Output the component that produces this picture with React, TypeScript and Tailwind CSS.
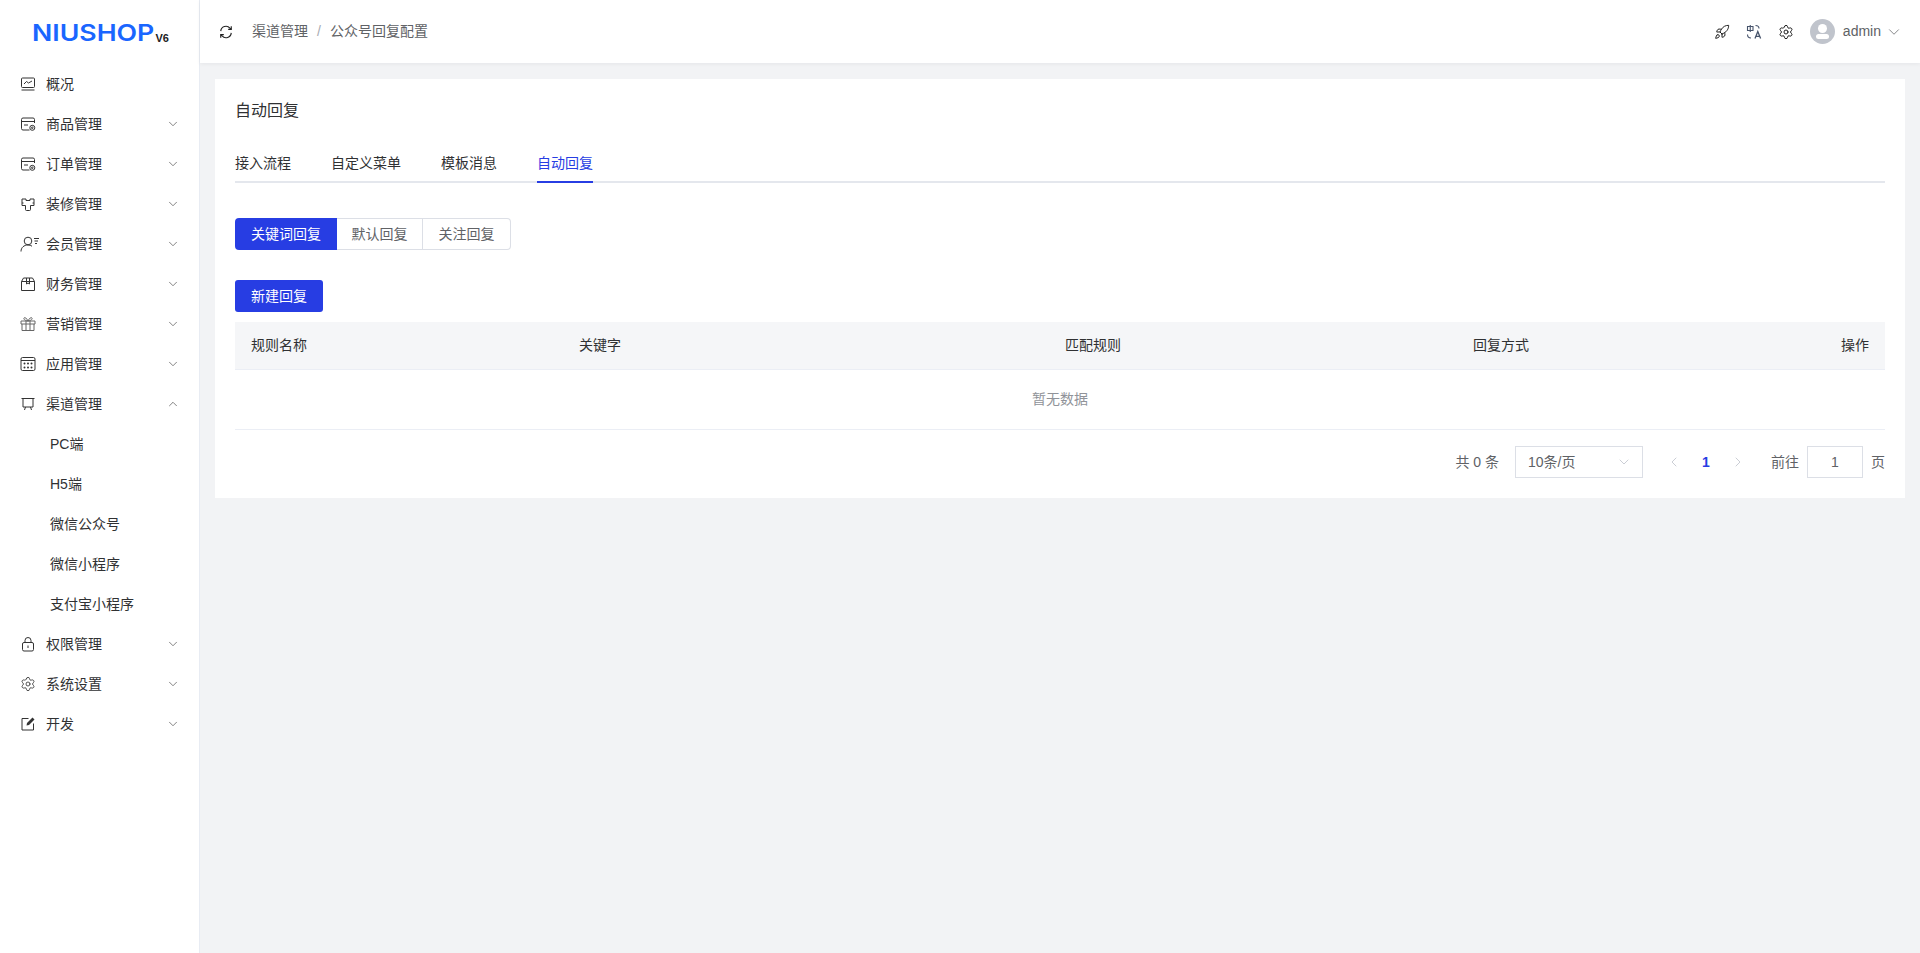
import React from "react";
import { ChevronDown, ChevronUp, ChevronLeft, ChevronRight, Rocket, Settings } from "lucide-react";

const icon = "w-4 h-4 text-[#333] shrink-0";
const S = { fill: "none", stroke: "currentColor", strokeWidth: 1, viewBox: "0 0 16 16", className: icon };

const IconOverview = () => (
  <svg {...S}>
    <rect x="1.500" y="2" width="13" height="9.500" rx="1" />
    <path d="M4 8l2.500-2.500 2 1.500L12 5M1.500 14h13" />
  </svg>
);
const IconGoods = () => (
  <svg {...S}>
    <path d="M14.500 7V3.500a1.500 1.500 0 0 0-1.500-1.500H3a1.500 1.500 0 0 0-1.500 1.500v9A1.500 1.500 0 0 0 3 14h6.500M1.500 5.500h13M4 9h4" />
    <circle cx="12.300" cy="11.800" r="2.500" />
    <circle cx="12.300" cy="11.800" r="0.800" />
  </svg>
);
const IconDecor = () => (
  <svg {...S}>
    <path d="M2 3h4v1.500h4V3h4v6.500h-3.500v4a1 1 0 0 1-1 1h-3a1 1 0 0 1-1-1v-4H2z" strokeLinejoin="round" />
    <path d="M2 7h1.500M12.500 7H14" />
  </svg>
);
const IconMember = () => (
  <svg viewBox="0 0 20 16" fill="none" stroke="currentColor" strokeWidth="1" className="w-[20px] h-4 mr-[-4px] text-[#333] shrink-0">
    <circle cx="8" cy="5" r="3.800" />
    <path d="M1 15.500c0-4 3-6.500 7-6.500 1.600 0 3 .4 4 1.200M14 2.500h5M14.500 5h3.500M15 7.500h2" />
  </svg>
);
const IconFinance = () => (
  <svg {...S}>
    <path d="M1.500 5.500l2-3.500h9l2 3.500V14.500h-13zM1.500 5.500h13" />
    <path d="M6.500 2v6l1.500-1 1.500 1V2" />
  </svg>
);
const IconGift = () => (
  <svg {...S} className="w-4 h-4 text-[#666] shrink-0">
    <path d="M1 5h14v3H1zM2 8v6.500h12V8M6 5v9.500M10 5v9.500" />
    <path d="M8 5C6.500 2 5 1.200 4.200 1.800 3.300 2.500 4 4.500 8 5c4-.5 4.700-2.500 3.800-3.200C11 1.200 9.500 2 8 5z" />
  </svg>
);
const IconApps = () => (
  <svg {...S}>
    <rect x="1" y="1.500" width="14" height="13" rx="1.500" />
    <path d="M1 4.500h14" />
    <g fill="currentColor" stroke="none">
      <circle cx="4.500" cy="7.500" r="1" />
      <circle cx="8" cy="7.500" r="1" />
      <circle cx="11.500" cy="7.500" r="1" />
      <circle cx="4.500" cy="11.500" r="1" />
      <circle cx="8" cy="11.500" r="1" />
      <circle cx="11.500" cy="11.500" r="1" />
    </g>
  </svg>
);
const IconChannel = () => (
  <svg {...S}>
    <path d="M1.500 2.500h13M3 2.500v8.500h10V2.500M5.500 11l-1 3M10.500 11l1 3" />
  </svg>
);
const IconLock = () => (
  <svg {...S}>
    <rect x="2.500" y="6.500" width="11" height="8.500" rx="1.500" />
    <path d="M5 6.500V4.500a3 3 0 0 1 6 0v2M8 9.500v2.500" />
  </svg>
);
const IconEdit = () => (
  <svg {...S}>
    <path d="M8.500 2.500H2v11.500h11.500V7.500" />
    <path d="M6.500 9.500l.5-2.500 5.500-5.500 2 2L9 9z" fill="currentColor" stroke="none" />
  </svg>
);

const MENU: { name: string; icon: React.ReactNode; open?: boolean; children?: string[] }[] = [
  { name: "概况", icon: <IconOverview /> },
  { name: "商品管理", icon: <IconGoods />, children: [] },
  { name: "订单管理", icon: <IconGoods />, children: [] },
  { name: "装修管理", icon: <IconDecor />, children: [] },
  { name: "会员管理", icon: <IconMember />, children: [] },
  { name: "财务管理", icon: <IconFinance />, children: [] },
  { name: "营销管理", icon: <IconGift />, children: [] },
  { name: "应用管理", icon: <IconApps />, children: [] },
  { name: "渠道管理", icon: <IconChannel />, open: true, children: ["PC端", "H5端", "微信公众号", "微信小程序", "支付宝小程序"] },
  { name: "权限管理", icon: <IconLock />, children: [] },
  { name: "系统设置", icon: <Settings className={icon} strokeWidth={1.25} />, children: [] },
  { name: "开发", icon: <IconEdit />, children: [] },
];

const Sidebar = () => (
  <aside className="w-[200px] shrink-0 bg-white border-r border-[#e8ecf3]">
    <div className="h-[64px] flex items-start pl-[32px] pt-[21px]">
      <span className="inline-block origin-left scale-x-[1.16] text-[#1a66ff] text-[23px] leading-[24px] font-semibold font-['Inter',sans-serif]">NIUSHOP</span>
      <span className="text-[#222] text-[11px] leading-[11px] font-bold mt-[12px] ml-[18px]">V6</span>
    </div>
    {MENU.map((m) => (
      <div key={m.name}>
        <div className="h-[40px] flex items-center pl-[20px] pr-[19px] text-[#303133]">
          {m.icon}
          <span className="ml-[10px] flex-1">{m.name}</span>
          {m.children && (m.open ? <ChevronUp className="w-[14px] h-[14px] text-[#555]" strokeWidth={1.25} /> : <ChevronDown className="w-[14px] h-[14px] text-[#555]" strokeWidth={1.25} />)}
        </div>
        {m.open && m.children?.map((c) => (
          <div key={c} className="h-[40px] flex items-center pl-[50px] text-[#303133]">{c}</div>
        ))}
      </div>
    ))}
  </aside>
);

const Header = () => (
  <header className="h-[63px] bg-white flex items-center pl-[19px] pr-[17px] shadow-[0_1px_4px_rgba(0,21,41,0.06)] relative">
    <svg viewBox="0 0 16 16" fill="none" stroke="#222" strokeWidth="1.300" className="w-[14px] h-[14px] mr-[19px]">
      <path d="M2 7a6 6 0 0 1 10.500-3.500L14 5M14 9a6 6 0 0 1-10.500 3.500L2 11" />
      <path d="M14 1.500V5h-3.500M2 14.500V11h3.500" />
    </svg>
    <span className="text-[#606266]">渠道管理</span>
    <span className="mx-[9px] text-[#a8abb2]">/</span>
    <span className="text-[#606266]">公众号回复配置</span>
    <div className="ml-auto flex items-center text-[#333]">
      <Rocket className="w-4 h-4 mr-[16px] text-[#222]" strokeWidth={1.5} />
      <svg viewBox="0 0 16 16" fill="none" stroke="#46536b" strokeWidth="1.100" className="w-4 h-4 mr-[16px]">
        <path d="M1.500 2.500h5.500v4h-5.500zM4.250 1v7M1.500 10.500c0 2 1 3.500 3.500 3.500M9.500 1.500c2 0 3.500 1 3.500 3" />
        <path d="M9 14.500l2.800-7 2.800 7M10 12.300h3.600" strokeWidth="1.300" />
      </svg>
      <Settings className="w-4 h-4 mr-[16px] text-[#222]" strokeWidth={1.5} />
      <div className="w-[25px] h-[25px] rounded-full bg-[#c0c4cc] flex flex-col items-center justify-center overflow-hidden">
        <div className="w-[9px] h-[9px] rounded-full bg-white" />
        <div className="w-[13px] h-[5px] rounded-[3px] bg-white mt-[1px]" />
      </div>
      <span className="ml-[8px] text-[#606266]">admin</span>
      <ChevronDown className="w-[18px] h-[18px] ml-[4px] text-[#606266]" strokeWidth={1} />
    </div>
  </header>
);

const TABS = ["接入流程", "自定义菜单", "模板消息", "自动回复"];
const COLS = [
  { name: "规则名称" },
  { name: "关键字" },
  { name: "匹配规则" },
  { name: "回复方式" },
  { name: "操作", right: true },
];

const Card = () => (
  <section className="bg-white px-[20px] pt-[21px] pb-[20px]">
    <h2 className="text-[16px] leading-[22px] text-[#303133]">自动回复</h2>
    <div className="mt-[21px] flex gap-[40px] border-b-2 border-[#e4e7ed] h-[40px]">
      {TABS.map((t, i) => (
        <div key={t} className={`h-[40px] shrink-0 leading-[40px] ${i === 3 ? "text-[#273de3] border-b-2 border-[#273de3]" : "text-[#303133]"}`}>{t}</div>
      ))}
    </div>
    <div className="mt-[35px] flex">
      <div className="w-[102px] h-[32px] flex items-center justify-center bg-[#273de3] text-white rounded-l-[4px]">关键词回复</div>
      <div className="w-[86px] h-[32px] flex items-center justify-center text-[#606266] border-y border-r border-[#dcdfe6]">默认回复</div>
      <div className="w-[88px] h-[32px] flex items-center justify-center text-[#606266] border-y border-r border-[#dcdfe6] rounded-r-[4px]">关注回复</div>
    </div>
    <div className="mt-[30px] w-[88px] h-[32px] rounded-[3px] bg-[#273de3] text-white flex items-center justify-center">新建回复</div>
    <div className="mt-[10px]">
      <div className="grid grid-cols-[328px_486px_408px_1fr_120px] h-[48px] items-center bg-[#f5f6f8] border-b border-[#ebeef5] text-[#303133]">
        {COLS.map((c) => (
          <div key={c.name} className={`px-[16px] ${c.right ? "text-right" : ""}`}>{c.name}</div>
        ))}
      </div>
      <div className="h-[60px] flex items-center justify-center border-b border-[#ebeef5] text-[#909399]">暂无数据</div>
    </div>
    <div className="mt-[16px] flex items-center justify-end text-[#606266] h-[32px]">
      <span>共 0 条</span>
      <div className="ml-[16px] w-[128px] h-[32px] border border-[#dcdfe6] flex items-center justify-between pl-[12px] pr-[10px]">
        <span>10条/页</span>
        <ChevronDown className="w-4 h-4 text-[#c0c4cc]" strokeWidth={1.25} />
      </div>
      <ChevronLeft className="ml-[23px] w-4 h-4 text-[#c0c4cc]" strokeWidth={1.25} />
      <span className="ml-[20px] w-[8px] text-center font-semibold text-[#273de3]">1</span>
      <ChevronRight className="ml-[20px] w-4 h-4 text-[#c0c4cc]" strokeWidth={1.25} />
      <span className="ml-[25px]">前往</span>
      <div className="ml-[8px] w-[56px] h-[32px] border border-[#dcdfe6] flex items-center justify-center">1</div>
      <span className="ml-[8px]">页</span>
    </div>
  </section>
);

export default function App() {
  return (
    <div className="flex h-[953px] bg-[#f2f3f5] text-[14px] overflow-hidden font-['Liberation_Sans','Noto_Sans_CJK_SC',sans-serif]">
      <Sidebar />
      <main className="flex-1 min-w-0 flex flex-col">
        <Header />
        <div className="pt-[16px] pl-[15px] pr-[15px]">
          <Card />
        </div>
      </main>
    </div>
  );
}
